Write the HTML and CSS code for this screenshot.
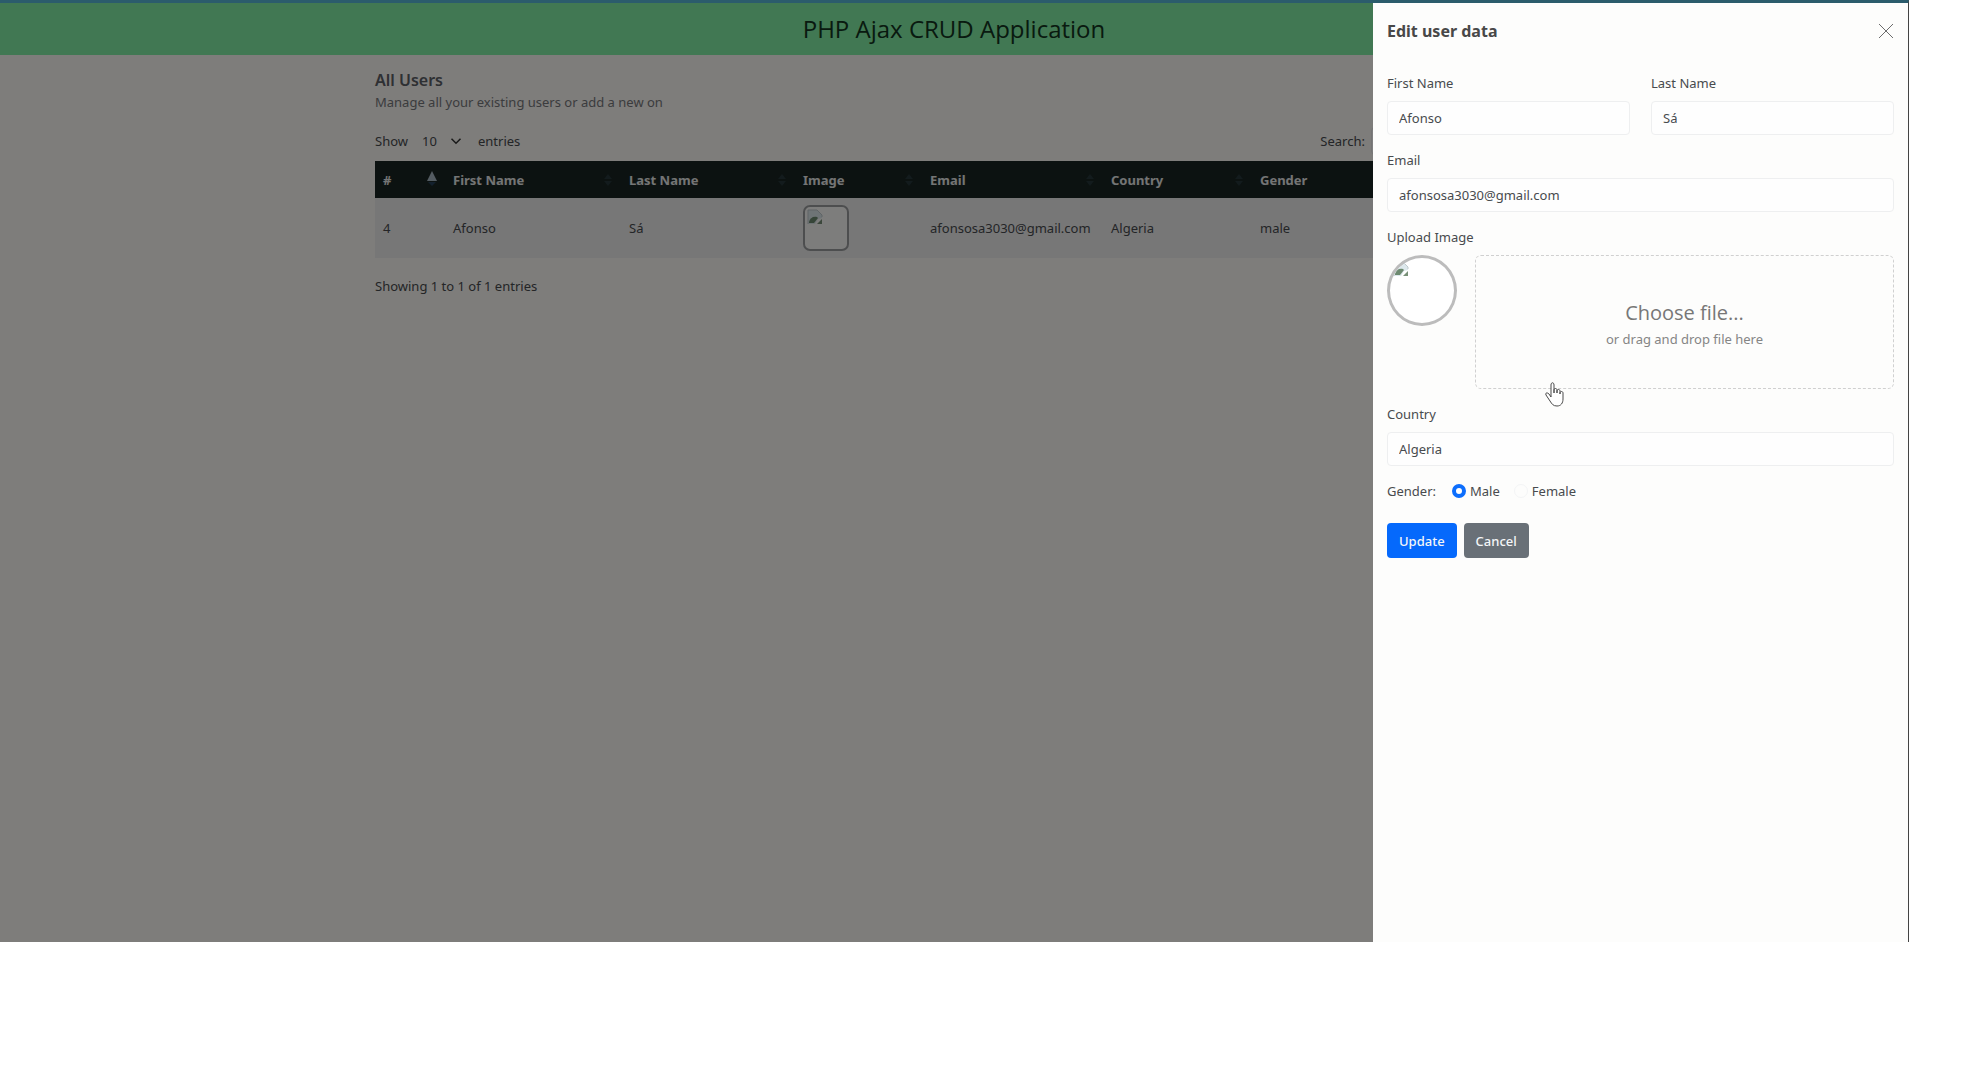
FILE: index.html
```html
<!DOCTYPE html>
<html lang="en">
<head>
<meta charset="utf-8">
<title>PHP Ajax CRUD Application</title>
<link rel="stylesheet" href="styles.css">
</head>
<body>
<svg class="sprite" aria-hidden="true">
  <symbol id="sort" viewBox="0 0 10 20"><path d="M5 4 9 9H1Z"/><path d="M5 16 1 11h8Z"/></symbol>
  <symbol id="sort-up" viewBox="0 0 10 20"><path d="M5 1 10 11H0Z" fill="#a8b8c4"/><path d="M5 16 1 12h8Z" fill="#26405a"/></symbol>
  <symbol id="broken" viewBox="0 0 16 16">
    <path d="M1 1h9l5 5v3l-4 1-3 5H1Z" fill="#dde8ec"/>
    <path d="M1 15V1h9l5 5v2" fill="none" stroke="#bfc9cc"/>
    <path d="M2 13c1-4 4-6 8-5l1 1-4 5H2Z" fill="#6d8a70"/>
    <path d="m10 15 5-5v5Z" fill="#789078"/>
  </symbol>
</svg>
<div class="stage">
  <header class="banner"><h1>PHP Ajax CRUD Application</h1></header>
  <main class="container">
    <h2>All Users</h2>
    <p class="lead">Manage all your existing users or add a new on</p>
    <div class="controls">
      <label class="length">Show
        <select><option>10</option><option>25</option><option>50</option></select>
        entries</label>
      <label class="search">Search: <input type="search"></label>
    </div>
    <table class="users">
      <colgroup>
        <col class="c-id"><col class="c-first"><col class="c-last"><col class="c-image"><col class="c-email"><col class="c-country"><col class="c-gender"><col>
      </colgroup>
      <thead>
        <tr>
          <th><button type="button">#<svg><use href="#sort-up"/></svg></button></th>
          <th><button type="button">First Name<svg><use href="#sort"/></svg></button></th>
          <th><button type="button">Last Name<svg><use href="#sort"/></svg></button></th>
          <th><button type="button">Image<svg><use href="#sort"/></svg></button></th>
          <th><button type="button">Email<svg><use href="#sort"/></svg></button></th>
          <th><button type="button">Country<svg><use href="#sort"/></svg></button></th>
          <th><button type="button">Gender</button></th>
          <th></th>
        </tr>
      </thead>
      <tbody>
        <tr>
          <td>4</td><td>Afonso</td><td>Sá</td>
          <td><div class="thumb"><svg><use href="#broken"/></svg></div></td>
          <td>afonsosa3030@gmail.com</td><td>Algeria</td><td>male</td><td></td>
        </tr>
      </tbody>
    </table>
    <p class="info">Showing 1 to 1 of 1 entries</p>
  </main>
  <div class="backdrop"></div>
  <aside class="drawer">
    <div class="drawer-head">
      <h2>Edit user data</h2>
      <button type="button" class="close" aria-label="Close"><svg viewBox="0 0 16 16"><path d="M1 1 15 15M15 1 1 15"/></svg></button>
    </div>
    <form>
      <div class="pair">
        <div class="field"><label for="first">First Name</label><input id="first" type="text" value="Afonso"></div>
        <div class="field"><label for="last">Last Name</label><input id="last" type="text" value="Sá"></div>
      </div>
      <div class="field"><label for="email">Email</label><input id="email" type="email" value="afonsosa3030@gmail.com"></div>
      <div class="upload-label">Upload Image</div>
      <div class="upload">
        <div class="avatar"><svg><use href="#broken"/></svg></div>
        <button type="button" class="drop"><span class="choose">Choose file...</span><span>or drag and drop file here</span></button>
        <svg class="pointer" viewBox="0 0 20 26"><path d="M6 15V3c0-3 3-3 3 0v8-3c0-2 3-2 3 0v3-2c0-2 3-2 3 0v3-1c0-2 3-2 3 0v6c0 4-2 7-6 7-4 0-5-2-7-5l-4-6c-1-2 1-3 3-1l2 3"/></svg>
      </div>
      <div class="field"><label for="country">Country</label><select id="country"><option>Algeria</option></select></div>
      <div class="gender">
        <span>Gender:</span>
        <label><input type="radio" name="gender" checked>Male</label>
        <label><input type="radio" name="gender">Female</label>
      </div>
      <div class="actions">
        <button type="submit" class="btn primary">Update</button>
        <button type="button" class="btn secondary">Cancel</button>
      </div>
    </form>
  </aside>
</div>
</body>
</html>
```
FILE: styles.css
```css
* { box-sizing: border-box; }
body {
  margin: 0;
  min-height: 100vh;
  padding: 0 71px 138px 0;
  display: flex;
  background: #fff;
  color: #484b4e;
  font: 13px/20px "Noto Sans", "Open Sans", sans-serif;
}
h1, h2, p { margin: 0; }
input, select, button { font: inherit; color: inherit; }
button { cursor: pointer; }
.sprite { position: absolute; width: 0; height: 0; }

.stage {
  position: relative;
  flex: 1;
  background: #fcfaf6;
  border-top: 3px solid #2b5c6c;
  border-right: 1px solid #444;
}
.banner { background: #82f0a6; padding: 8px 0; text-align: center; }
.banner h1 { font: 400 24px/36px "Open Sans", "Noto Sans", sans-serif; color: #123420; }

.container { max-width: 1182px; margin: 0 auto; padding: 14px 12px; }
.container h2 { font-size: 16px; line-height: 22px; font-weight: 600; color: #5c6066; }
.lead { line-height: 22px; color: #77797c; }
.controls { display: flex; justify-content: space-between; align-items: center; height: 30px; margin: 13px 0 5px; }
.length { display: flex; align-items: center; gap: 5px; }
.length select {
  appearance: none;
  width: 60px;
  height: 28px;
  padding: 0 8px;
  border: 1px solid transparent;
  background: url("data:image/svg+xml,%3Csvg xmlns='http://www.w3.org/2000/svg' viewBox='0 0 16 16'%3E%3Cpath d='m2 5 6 6 6-6' fill='none' stroke='%23333' stroke-width='2'/%3E%3C/svg%3E") no-repeat right 10px center / 12px;
}
.search { display: flex; align-items: center; gap: 6px; }
.search input { width: 162px; height: 28px; border: 1px solid #e8e8e8; border-radius: 4px; background: #fff; }

.users { width: 100%; table-layout: fixed; border-collapse: collapse; text-align: left; }
.c-id { width: 70px; }
.c-first { width: 176px; }
.c-last { width: 174px; }
.c-image { width: 127px; }
.c-email { width: 181px; }
.c-country { width: 149px; }
.c-gender { width: 140px; }
.users th { height: 37px; padding: 0 8px; background: #182422; }
.users th button {
  display: flex;
  justify-content: space-between;
  align-items: center;
  width: 100%;
  padding: 0;
  border: 0;
  background: none;
  color: #e8eaea;
  font-weight: 700;
}
.users th svg { width: 10px; height: 20px; fill: #26363a; }
.users td { height: 60px; padding: 0 8px; background: #eee; white-space: nowrap; }
.thumb { width: 46px; height: 46px; padding: 2px; border: 2px solid #9b9d9f; border-radius: 7px; background: #fbfaf8; }
.thumb svg, .avatar svg { display: block; width: 16px; height: 16px; }
.info { padding-top: 18px; }

.backdrop { position: absolute; inset: 0; background: rgba(0, 0, 0, .5); }

.drawer { position: absolute; top: 0; right: 0; bottom: 0; width: 535px; padding: 14px; background: #fdfdfc; }
.drawer-head { display: flex; justify-content: space-between; align-items: center; height: 28px; margin-bottom: 28px; }
.drawer-head h2 { font-size: 16px; font-weight: 700; color: #484848; }
.close { width: 16px; height: 16px; padding: 0; border: 0; background: none; }
.close svg { display: block; width: 16px; height: 16px; stroke: #6c6c6c; stroke-width: 1; fill: none; }
.pair { display: grid; grid-template-columns: 1fr 1fr; gap: 21px; }
.field { display: flex; flex-direction: column; gap: 8px; margin-bottom: 15px; }
.field input, .field select {
  appearance: none;
  width: 100%;
  height: 34px;
  padding: 0 11px;
  border: 1px solid #eeeff0;
  border-radius: 4px;
  background: #fefefe;
}
.upload-label { margin-bottom: 8px; }
.upload { position: relative; display: flex; align-items: flex-start; gap: 18px; margin-bottom: 15px; }
.avatar { width: 70px; height: 71px; border: 3px solid #bcbcbc; border-radius: 50%; background: #fff; overflow: hidden; padding: 3px; }
.drop {
  flex: 1;
  height: 134px;
  padding: 4px 0 0;
  display: flex;
  flex-direction: column;
  align-items: center;
  justify-content: center;
  gap: 2px;
  border: 1px dashed #d0d0d0;
  border-radius: 6px;
  background: none;
  color: #858585;
}
.choose { font: 20px/28px "Open Sans", "Noto Sans", sans-serif; color: #777; }
.pointer { position: absolute; left: 158px; top: 127px; width: 20px; height: 26px; fill: #fff; stroke: #4a4a4a; stroke-width: 1; }
.gender { display: flex; align-items: center; }
.gender span { margin-right: 16px; }
.gender label { display: flex; align-items: center; gap: 4px; margin-right: 14px; }
.gender input { appearance: none; width: 14px; height: 14px; margin: 0; border: 1px solid #f4f5f6; border-radius: 50%; }
.gender input:checked { border: 4px solid #0d6efd; background: #fff; }
.actions { display: flex; gap: 7px; margin-top: 22px; }
.btn { height: 35px; padding: 0 12px; border: 0; border-radius: 4px; color: #f4f6f8; font-weight: 500; }
.primary { background: #0569fc; }
.secondary { background: #697077; }
```
